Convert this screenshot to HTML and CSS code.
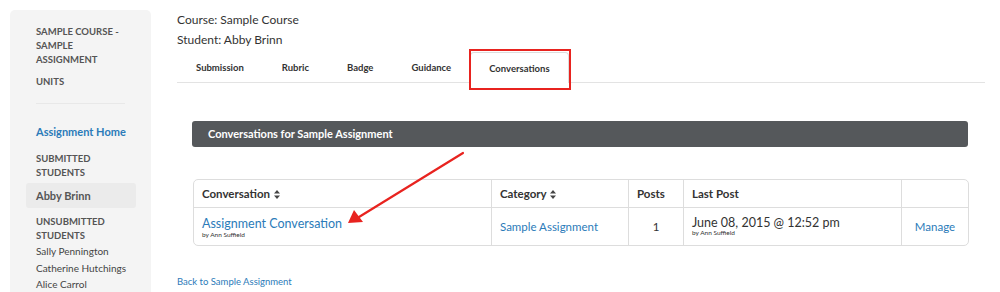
FILE: index.html
```html
<!DOCTYPE html>
<html lang="en">
<head>
    <meta charset="UTF-8">
    <title>Conversations</title>
    <link rel="stylesheet" href="styles.css">
</head>
<body>
    <div class="page">
        <aside class="sidebar">
            <div class="side-title">Sample Course - Sample Assignment</div>
            <div class="side-head units">Units</div>
            <hr class="side-rule">
            <a class="side-home" href="#">Assignment Home</a>
            <div class="side-head submitted">Submitted<br>Students</div>
            <div class="side-active">Abby Brinn</div>
            <div class="side-head unsubmitted">Unsubmitted<br>Students</div>
            <div class="side-student">Sally Pennington</div>
            <div class="side-student">Catherine Hutchings</div>
            <div class="side-student">Alice Carrol</div>
        </aside>

        <main class="main">
            <div class="meta">Course: Sample Course</div>
            <div class="meta">Student: Abby Brinn</div>

            <nav class="tabs">
                <div class="tab">Submission</div>
                <div class="tab">Rubric</div>
                <div class="tab">Badge</div>
                <div class="tab">Guidance</div>
                <div class="tab active">Conversations</div>
            </nav>

            <div class="panel-bar">Conversations for Sample Assignment</div>

            <table class="conv-table">
                <thead>
                    <tr>
                        <th class="col-conv">Conversation <svg class="sort" viewBox="0 0 6 9"><path d="M0 3.6 L3 0 L6 3.6 Z M0 5.4 L3 9 L6 5.4 Z"/></svg></th>
                        <th class="col-cat">Category <svg class="sort" viewBox="0 0 6 9"><path d="M0 3.6 L3 0 L6 3.6 Z M0 5.4 L3 9 L6 5.4 Z"/></svg></th>
                        <th class="col-posts">Posts</th>
                        <th class="col-last">Last Post</th>
                        <th class="col-manage"></th>
                    </tr>
                </thead>
                <tbody>
                    <tr>
                        <td><a class="conv-link" href="#">Assignment Conversation</a><div class="by">by Ann Suffield</div></td>
                        <td><a class="link" href="#">Sample Assignment</a></td>
                        <td class="posts">1</td>
                        <td><div class="date">June 08, 2015 @ 12:52 pm</div><div class="by">by Ann Suffield</div></td>
                        <td class="manage"><a class="link" href="#">Manage</a></td>
                    </tr>
                </tbody>
            </table>

            <a class="back" href="#">Back to Sample Assignment</a>
        </main>
    </div>

    <!-- annotation arrow -->
    <svg class="arrow" width="1000" height="292" viewBox="0 0 1000 292">
        <line x1="463" y1="153" x2="359" y2="217" stroke="#e8231f" stroke-width="2.2" stroke-linecap="round"/>
        <path d="M348 223 L354 210 L363 222 Z" fill="#e8231f"/>
    </svg>
</body>
</html>
```

FILE: styles.css
```css
body {
    margin: 0;
    font-family: 'Lato', 'Noto Sans', sans-serif;
    color: #333;
    background: #fff;
    overflow: hidden;
}

a {
    text-decoration: none;
}

.page {
    display: flex;
    align-items: flex-start;
    height: 292px;
}

/* sidebar */

.sidebar {
    width: 141px;
    height: 282px;
    margin: 10px 0 0 10px;
    padding: 15px 0 0 26px;
    box-sizing: border-box;
    background-color: #f4f4f4;
    border-radius: 5px 5px 0 0;
}

.side-title,
.side-head {
    font-size: 9.5px;
    font-weight: bold;
    text-transform: uppercase;
    line-height: 14px;
    color: #555;
    padding-right: 20px;
}

.units {
    margin-top: 8px;
}

.side-rule {
    width: 89px;
    margin: 14px 0 0 0;
    border: none;
    border-top: 1px solid #e8e8e8;
}

.side-home {
    display: block;
    margin-top: 20px;
    font-size: 11px;
    font-weight: bold;
    line-height: 16px;
    color: #2b7bb9;
}

.submitted {
    margin-top: 12px;
}

.side-active {
    margin: 3px 15px 0 -10px;
    padding-left: 10px;
    height: 25px;
    line-height: 25px;
    font-size: 11px;
    font-weight: bold;
    color: #555;
    background-color: #ebebeb;
    border-radius: 3px;
}

.unsubmitted {
    margin-top: 7px;
}

.side-student {
    font-size: 10px;
    line-height: 16.5px;
    color: #444;
}

/* main area */

.main {
    width: 808px;
    margin-left: 26px;
    padding-top: 10px;
}

.meta {
    font-size: 12px;
    line-height: 20px;
    color: #333;
}

.tabs {
    display: flex;
    margin-top: 2px;
    height: 30px;
    border-bottom: 1px solid #e3e3e3;
}

.tab {
    padding: 0 19px;
    font-size: 9.5px;
    font-weight: bold;
    line-height: 32px;
    color: #333;
}

.tab.active {
    position: relative;
    box-sizing: border-box;
    padding: 0 18px;
    height: 31px;
    line-height: 31px;
    background: #fff;
    border: 1px solid #ddd;
    border-bottom: none;
    border-radius: 4px 4px 0 0;
}

.tab.active::after {
    content: "";
    position: absolute;
    left: -2px;
    right: -3px;
    top: -4px;
    bottom: -7px;
    border: 2px solid #e8231f;
}

.panel-bar {
    margin: 38px 17px 0 15px;
    height: 26px;
    line-height: 26px;
    padding-left: 16px;
    background-color: #55585b;
    color: #fff;
    font-size: 11px;
    font-weight: bold;
    border-radius: 3px;
}

.conv-table {
    width: 776px;
    margin: 32px 0 0 16px;
    border-collapse: separate;
    border-spacing: 0;
    border: 1px solid #ddd;
    border-radius: 5px;
    font-size: 11.5px;
}

.conv-table th {
    height: 27px;
    padding: 0 8px;
    text-align: left;
    font-weight: bold;
    color: #333;
    border-bottom: 1px solid #ddd;
    border-left: 1px solid #ddd;
}

.conv-table td {
    height: 37px;
    padding: 0 8px;
    border-left: 1px solid #ddd;
    vertical-align: middle;
}

.conv-table th:first-child,
.conv-table td:first-child {
    border-left: none;
}

.col-conv { width: 281px; }
.col-cat { width: 120px; }
.col-posts { width: 38px; }
.col-last { width: 201px; }

.sort {
    width: 6px;
    height: 9px;
    fill: #444;
    vertical-align: -1px;
    margin-left: 1px;
}

.conv-link {
    display: block;
    font-size: 12.5px;
    line-height: 14px;
    color: #2b7bb9;
    margin-top: 2px;
}

.link {
    font-size: 11.5px;
    color: #2b7bb9;
}

.by {
    font-size: 6.5px;
    line-height: 8px;
    color: #333;
}

.posts {
    text-align: center;
}

.date {
    font-size: 12.5px;
    line-height: 12px;
    color: #333;
}

.manage {
    text-align: center;
}

.back {
    display: block;
    margin-top: 30px;
    font-size: 9.5px;
    color: #2b7bb9;
}

.arrow {
    position: absolute;
    left: 0;
    top: 0;
    pointer-events: none;
}
```
